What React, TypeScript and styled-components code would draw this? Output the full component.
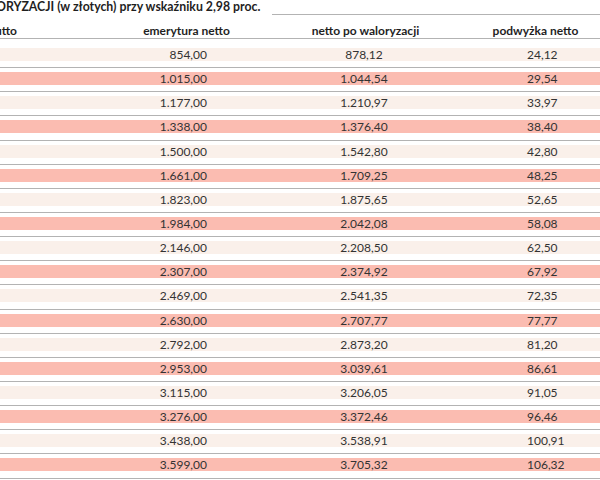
import React from "react";
import styled, { createGlobalStyle } from "styled-components";

const Global = createGlobalStyle`
  html, body { margin: 0; padding: 0; background: #ffffff; }
  body { font-family: Lato, "Open Sans", sans-serif; color: #333333; }
`;

const Page = styled.div`
  width: 600px;
  height: 480px;
  overflow: hidden;
  background: #ffffff;
`;

const TitleBar = styled.div`
  display: flex;
  align-items: flex-start;
  gap: 12px;
  height: 15px;
`;

const Title = styled.h1`
  margin: 0 0 0 -4px;
  font-size: 12.3px;
  line-height: 14px;
  font-weight: 700;
  color: #1f1f1f;
  white-space: nowrap;
`;

const TitleRule = styled.div`
  flex: 1;
  margin-top: 14px;
  height: 1px;
  background: #b3b3b3;
`;

const cols = `98px 177px 178px 1fr`;

const HeaderRow = styled.div`
  display: grid;
  grid-template-columns: ${cols};
  padding-top: 9px;
  border-bottom: 1px solid #b3b3b3;
`;

type CellProps = { $align: "start" | "center" | "end"; $pl?: number; $pr?: number };

const HeadCell = styled.div<CellProps>`
  display: flex;
  justify-content: ${(p) => (p.$align === "start" ? "flex-start" : p.$align === "end" ? "flex-end" : "center")};
  padding-left: ${(p) => p.$pl ?? 0}px;
  padding-right: ${(p) => p.$pr ?? 0}px;
  font-size: 12px;
  line-height: 14px;
  font-weight: 700;
  color: #1f1f1f;
  white-space: nowrap;
`;

const RowWrap = styled.div<{ $first: boolean }>`
  padding-top: ${(p) => (p.$first ? 9 : 4)}px;
  padding-bottom: 6.15px;
  border-bottom: 1px solid #b3b3b3;
`;

const Band = styled.div<{ $tone: "light" | "strong" }>`
  display: grid;
  grid-template-columns: ${cols};
  height: 13px;
  background: ${(p) => (p.$tone === "light" ? "#faf0ea" : "#fbbcb1")};
`;

const Cell = styled.div<CellProps>`
  display: flex;
  justify-content: ${(p) => (p.$align === "start" ? "flex-start" : p.$align === "end" ? "flex-end" : "center")};
  padding-left: ${(p) => p.$pl ?? 0}px;
  padding-right: ${(p) => p.$pr ?? 0}px;
  font-size: 12px;
  line-height: 13px;
  color: #333333;
  white-space: nowrap;
`;

const rows: [string, string, string][] = [
  ["854,00", "878,12", "24,12"],
  ["1.015,00", "1.044,54", "29,54"],
  ["1.177,00", "1.210,97", "33,97"],
  ["1.338,00", "1.376,40", "38,40"],
  ["1.500,00", "1.542,80", "42,80"],
  ["1.661,00", "1.709,25", "48,25"],
  ["1.823,00", "1.875,65", "52,65"],
  ["1.984,00", "2.042,08", "58,08"],
  ["2.146,00", "2.208,50", "62,50"],
  ["2.307,00", "2.374,92", "67,92"],
  ["2.469,00", "2.541,35", "72,35"],
  ["2.630,00", "2.707,77", "77,77"],
  ["2.792,00", "2.873,20", "81,20"],
  ["2.953,00", "3.039,61", "86,61"],
  ["3.115,00", "3.206,05", "91,05"],
  ["3.276,00", "3.372,46", "96,46"],
  ["3.438,00", "3.538,91", "100,91"],
  ["3.599,00", "3.705,32", "106,32"],
];

export default function App() {
  return (
    <Page>
      <Global />
      <TitleBar>
        <Title>ORYZACJI (w złotych) przy wskaźniku 2,98 proc.</Title>
        <TitleRule />
      </TitleBar>
      <HeaderRow>
        <HeadCell $align="end" $pr={81}>emerytura brutto</HeadCell>
        <HeadCell $align="center">emerytura netto</HeadCell>
        <HeadCell $align="center" $pl={3}>netto po waloryzacji</HeadCell>
        <HeadCell $align="center" $pl={18}>podwyżka netto</HeadCell>
      </HeaderRow>
      {rows.map((r, i) => (
        <RowWrap key={i} $first={i === 0}>
          <Band $tone={i % 2 === 0 ? "light" : "strong"}>
            <Cell $align="end" />
            <Cell $align="end" $pr={68}>{r[0]}</Cell>
            <Cell $align="center">{r[1]}</Cell>
            <Cell $align="start" $pl={74}>{r[2]}</Cell>
          </Band>
        </RowWrap>
      ))}
    </Page>
  );
}
